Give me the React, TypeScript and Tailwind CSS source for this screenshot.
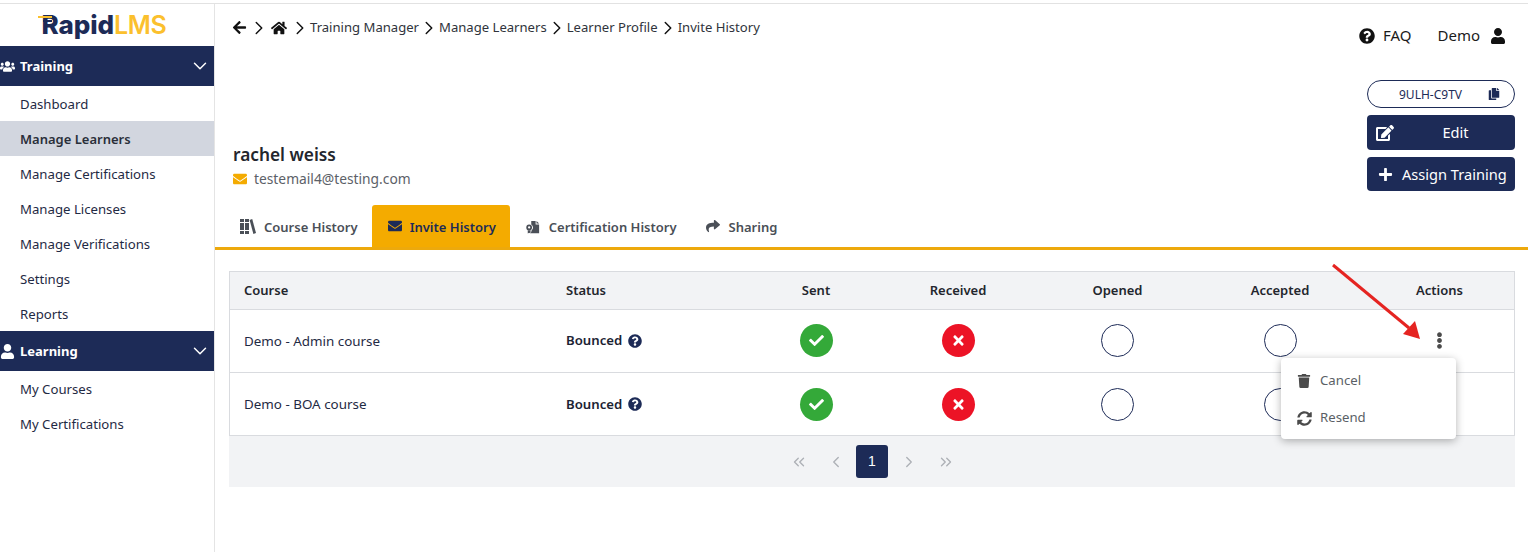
import {
  FaArrowLeft,
  FaCheck,
  FaCopy,
  FaEdit,
  FaEllipsisV,
  FaEnvelope,
  FaHome,
  FaPlus,
  FaQuestionCircle,
  FaShare,
  FaSyncAlt,
  FaTimes,
  FaTrash,
  FaUser,
  FaUsers,
} from 'react-icons/fa';
import { ChevronDown, ChevronLeft, ChevronRight, ChevronsLeft, ChevronsRight } from 'lucide-react';

const NAVY = 'bg-[#1d2b57]';
const COLS = 'grid grid-cols-[minmax(0,1fr)_205px_120px_164px_155px_170px_149px]';

const training = ['Dashboard', 'Manage Learners', 'Manage Certifications', 'Manage Licenses', 'Manage Verifications', 'Settings', 'Reports'];
const learning = ['My Courses', 'My Certifications'];
const crumbs = ['Training Manager', 'Manage Learners', 'Learner Profile', 'Invite History'];

function BooksIcon() {
  return (
    <svg viewBox="0 0 16 15" className="h-[15px] w-[16px]" fill="currentColor">
      <path d="M0 0h4v3H0zM0 4h4v7H0zM0 12h4v3H0zM5 0h4v3H5zM5 4h4v7H5zM5 12h4v3H5z" />
      <path d="M9.6.9 12.2 0 16 14l-2.6.9z" />
    </svg>
  );
}

function CertIcon() {
  return (
    <svg viewBox="0 0 16 16" className="h-[16px] w-[14px]" fill="currentColor">
      <path d="M6 1h5v4h4v10H5.5l1-3.2A4 4 0 0 0 6 5.2z" />
      <path d="M12 1l3 3h-3z" />
      <path fillRule="evenodd" d="M3.6 5.2a3.3 3.3 0 1 1 0 6.6 3.3 3.3 0 0 1 0-6.6zm0 2a1.3 1.3 0 1 0 0 2.6 1.3 1.3 0 0 0 0-2.6z" />
      <path d="M2 11.6h3.2v3.9l-1.6-1-1.6 1z" />
    </svg>
  );
}

function Logo() {
  return (
    <div className="relative flex h-[42px] items-center justify-center pr-[6px]">
      <div className="flex items-baseline font-['Inter',sans-serif] leading-none">
        <span className="text-[26px] font-extrabold tracking-[-0.1px] text-[#1d2b57]">Rapid</span>
        <span className="text-[25px] font-semibold tracking-[-0.3px] text-[#fbc02d]">LMS</span>
      </div>
      <svg viewBox="0 0 20 10" className="absolute left-[38px] top-[10px] h-[10px] w-[20px]">
        <path d="M0 3h14" stroke="#fbc02d" strokeWidth="2" />
        <path d="M5 7h9" stroke="#1d2b57" strokeWidth="2" />
      </svg>
    </div>
  );
}

function NavHeader({ label, icon }: { label: string; icon: React.ReactNode }) {
  return (
    <div className={`flex h-[40px] items-center justify-between ${NAVY} pr-[3px] text-white`}>
      <div className="flex items-center">
        <span className="flex w-[20px] justify-start text-[15px]">{icon}</span>
        <span className="pt-[2px] text-[13px] font-bold">{label}</span>
      </div>
      <ChevronDown size={22} strokeWidth={1.6} />
    </div>
  );
}

function NavItem({ label }: { label: string }) {
  const active = label === 'Manage Learners';
  return (
    <div className={`flex h-[35px] items-center pl-[20px] pt-[2px] ${active ? 'bg-[#d2d6df] text-[13px] font-semibold text-[#2a2f3a]' : 'text-[13.2px] text-[#1f2a44]'}`}>
      {label}
    </div>
  );
}

function Tab({ label, icon, className }: { label: string; icon: React.ReactNode; className: string }) {
  return (
    <div className={`flex h-[42px] items-center rounded-t-[3px] text-[13px] font-semibold ${className}`}>
      {icon}
      <span className="pt-[3px]">{label}</span>
    </div>
  );
}

function Yes() {
  return (
    <span className="flex h-[33px] w-[33px] items-center justify-center rounded-full bg-[#34a939] text-[15px] text-white">
      <FaCheck />
    </span>
  );
}

function No() {
  return (
    <span className="flex h-[33px] w-[33px] items-center justify-center rounded-full bg-[#ec1326] text-[15px] text-white">
      <FaTimes />
    </span>
  );
}

function Empty() {
  return <span className="h-[33px] w-[33px] rounded-full border border-[#1d2b57] bg-white" />;
}

function Row({ course, menu, last }: { course: string; menu?: boolean; last?: boolean }) {
  return (
    <div className={`${COLS} items-center text-[13.4px] text-[#1f2a44] ${last ? 'h-[62px]' : 'h-[63px] border-b border-[#d9dbdf] pb-[1px]'}`}>
      <div className="pl-[14px] pt-[1px]">{course}</div>
      <div className="flex items-center gap-[6px] pl-[15px] pt-[1px] text-[13.2px] font-semibold text-[#1c2333]">
        Bounced
        <FaQuestionCircle className="text-[14px] text-[#1d2b57]" />
      </div>
      <div className="flex justify-center"><Yes /></div>
      <div className="flex justify-center"><No /></div>
      <div className="flex justify-center"><Empty /></div>
      <div className="flex justify-center"><Empty /></div>
      <div className="flex justify-center text-[17px] text-[#4b4b4b]">{menu && <FaEllipsisV />}</div>
    </div>
  );
}

export default function App() {
  return (
    <div className="relative flex h-[552px] w-[1528px] overflow-hidden bg-white pt-[4px] font-['Noto_Sans',sans-serif]">
      <div className="absolute left-0 right-0 top-[3px] h-px bg-[#e2e2e2]" />

      {/* Sidebar */}
      <aside className="w-[215px] shrink-0 border-r border-[#e4e4e4]">
        <Logo />
        <NavHeader label="Training" icon={<FaUsers />} />
        {training.map(t => <NavItem key={t} label={t} />)}
        <NavHeader label="Learning" icon={<FaUser />} />
        {learning.map(t => <NavItem key={t} label={t} />)}
      </aside>

      <main className="flex min-w-0 flex-1 flex-col">
        {/* Top area */}
        <div className="flex h-[201px] justify-between pl-[17px] pr-[13px]">
          <div className="flex flex-col justify-between pb-[16px]">
            <div className="flex h-[46px] items-center pt-[1px] text-[13.1px] text-[#30343c]">
              <FaArrowLeft className="text-[15px] text-[#111]" />
              <ChevronRight size={22} strokeWidth={1.6} className="mx-[1px] text-[#111]" />
              <FaHome className="mr-[3px] text-[16px] text-[#111]" />
              {crumbs.map(c => (
                <span key={c} className="flex items-center">
                  <ChevronRight size={22} strokeWidth={1.6} className="-mx-[1px] text-[#111]" />
                  <span>{c}</span>
                </span>
              ))}
            </div>
            <div className="pl-[1px]">
              <div className="text-[17.3px] font-semibold leading-[25px] text-[#23262d]">rachel weiss</div>
              <div className="mt-[2px] flex items-center gap-[7px] text-[13.8px] leading-[20px] text-[#5c6168]">
                <FaEnvelope className="text-[14px] text-[#f4ab00]" />
                testemail4@testing.com
              </div>
            </div>
          </div>

          <div className="flex flex-col items-end">
            <div className="mr-[9px] flex h-[62px] items-center gap-[26px] pt-[1px] text-[15px] text-[#1b1b1b]">
              <span className="flex items-center gap-[8px]">
                <FaQuestionCircle className="text-[16px] text-[#111]" />
                FAQ
              </span>
              <span className="flex items-center gap-[10px]">
                Demo
                <FaUser className="text-[16px] text-[#111]" />
              </span>
            </div>
            <div className="mt-[14px] flex w-[148px] flex-col gap-[7px]">
              <div className="flex h-[28px] items-center rounded-full border border-[#1d2b57] text-[12px] text-[#1d2b57]">
                <span className="ml-[31px] flex-1 pt-[1px]">9ULH-C9TV</span>
                <FaCopy className="mr-[14px] text-[12px]" />
              </div>
              <div className={`flex h-[35px] items-center rounded-[4px] ${NAVY} pl-[9px] text-[14.6px] text-white`}>
                <FaEdit className="text-[18px]" />
                <span className="flex-1 pl-[2px] text-center">Edit</span>
              </div>
              <div className={`flex h-[34px] items-center gap-[9px] rounded-[4px] ${NAVY} pl-[11px] text-[14.6px] text-white`}>
                <FaPlus className="text-[15px]" />
                <span className="pt-[1px]">Assign Training</span>
              </div>
            </div>
          </div>
        </div>

        {/* Tabs */}
        <div className="flex h-[45px] border-b-[3px] border-[#eda90c] pl-[10px]">
          <Tab label="Course History" icon={<span className="mr-[8px] pt-[1px]"><BooksIcon /></span>} className="pl-[15px] pr-[14px] text-[#4a4f57]" />
          <Tab label="Invite History" icon={<FaEnvelope className="mr-[8px] text-[14px]" />} className="bg-[#f4ab00] pl-[16px] pr-[14px] text-[#1d2b57]" />
          <Tab label="Certification History" icon={<span className="mr-[9px] pt-[1px]"><CertIcon /></span>} className="pl-[16px] pr-[14px] text-[#4a4f57]" />
          <Tab label="Sharing" icon={<FaShare className="mr-[9px] text-[14px]" />} className="pl-[15px] pr-[14px] text-[#4a4f57]" />
        </div>

        {/* Table */}
        <div className="ml-[14px] mr-[13px] mt-[21px]">
          <div className="border border-[#d9dbdf]">
            <div className={`${COLS} h-[38px] items-center border-b border-[#d9dbdf] bg-[#f2f3f5] pt-[1px] text-[13px] font-semibold text-[#23262d]`}>
              <div className="pl-[14px]">Course</div>
              <div className="pl-[15px]">Status</div>
              <div className="text-center">Sent</div>
              <div className="text-center">Received</div>
              <div className="text-center">Opened</div>
              <div className="text-center">Accepted</div>
              <div className="text-center">Actions</div>
            </div>
            <Row course="Demo - Admin course" menu />
            <Row course="Demo - BOA course" last />
          </div>
          <div className="flex h-[51px] items-center justify-center gap-[4px] bg-[#f2f3f5] text-[#adb0b6]">
            <span className="flex w-[33px] justify-center"><ChevronsLeft size={18} strokeWidth={1.8} /></span>
            <span className="flex w-[33px] justify-center"><ChevronLeft size={18} strokeWidth={1.8} /></span>
            <span className={`flex h-[33px] w-[32px] items-center justify-center rounded-[3px] ${NAVY} font-['Liberation_Sans',sans-serif] text-[14px] text-white`}>1</span>
            <span className="flex w-[33px] justify-center"><ChevronRight size={18} strokeWidth={1.8} /></span>
            <span className="flex w-[33px] justify-center"><ChevronsRight size={18} strokeWidth={1.8} /></span>
          </div>
        </div>
      </main>

      {/* Dropdown menu */}
      <div className="absolute left-[1281px] top-[358px] flex h-[81px] w-[175px] flex-col justify-center rounded-[4px] bg-white pt-[2px] text-[13.2px] text-[#5a5f66] shadow-[0_2px_8px_rgba(0,0,0,0.3)]">
        <div className="flex h-[37px] items-center gap-[9px] pl-[16px]">
          <FaTrash className="text-[14px] text-[#4b4b4b]" />
          Cancel
        </div>
        <div className="flex h-[37px] items-center gap-[8px] pl-[16px]">
          <FaSyncAlt className="text-[15px] text-[#4b4b4b]" />
          Resend
        </div>
      </div>

      {/* Annotation arrow */}
      <svg className="absolute left-[1325px] top-[258px] h-[90px] w-[105px]" viewBox="0 0 105 90">
        <path d="M8 7 84 70" stroke="#e52421" strokeWidth="3" />
        <path d="M95 81 78 76 90 63z" fill="#e52421" />
      </svg>
    </div>
  );
}
